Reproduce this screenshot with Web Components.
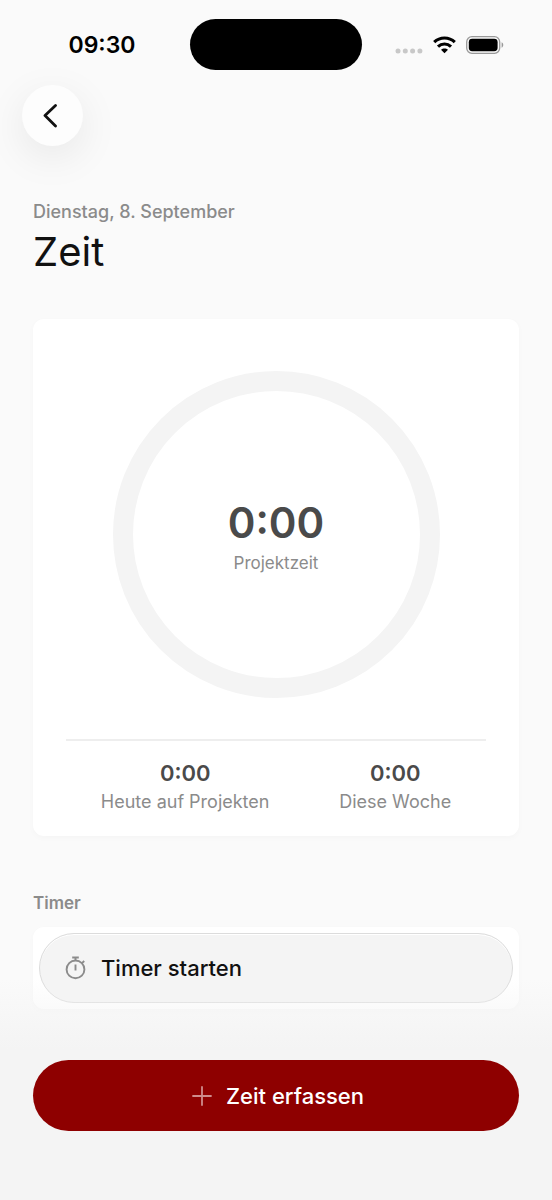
<!DOCTYPE html>
<html lang="de">
<head>
<meta charset="utf-8">
<meta name="viewport" content="width=device-width, initial-scale=1">
<title>Zeit</title>
<style>
  html, body { margin: 0; }
  body {
    --bg: #fafafa;
    --surface: #fff;
    --muted: #8b8b8b;
    --strong: #4a4a4a;
    --ink: #111;
    --track: #f4f4f4;
    --accent: #8e0000;
    --gutter: 33px;
    background: var(--bg);
    color: var(--ink);
    font-family: Inter, "Liberation Sans", sans-serif;
    -webkit-font-smoothing: antialiased;
  }
</style>
</head>
<body>
<time-screen>
  <status-bar slot="status" time="09:30"></status-bar>
  <back-button slot="nav"></back-button>
  <page-header eyebrow="Dienstag, 8. September">Zeit</page-header>
  <summary-card>
    <progress-ring slot="ring" value="0:00">Projektzeit</progress-ring>
    <stat-item value="0:00">Heute auf Projekten</stat-item>
    <stat-item value="0:00">Diese Woche</stat-item>
  </summary-card>
  <timer-section heading="Timer">Timer starten</timer-section>
  <primary-action slot="footer">Zeit erfassen</primary-action>
</time-screen>

<script>
  function define(name, html) {
    const template = document.createElement('template');
    template.innerHTML = html;
    customElements.define(name, class extends HTMLElement {
      constructor() {
        super();
        this.attachShadow({ mode: 'open' }).append(template.content.cloneNode(true));
      }
      connectedCallback() {
        for (const el of this.shadowRoot.querySelectorAll('[data-attr]')) {
          el.textContent = this.getAttribute(el.dataset.attr) || '';
        }
      }
    });
  }

  define('time-screen', `
    <style>
      :host { display: flex; flex-direction: column; min-height: 100vh; }
      .nav { padding: 0 22px; }
      main { flex: 1; padding: 56px var(--gutter) 0; }
      footer {
        position: sticky; bottom: 0; margin-top: -40px; padding: 91px var(--gutter) 69px;
        background: linear-gradient(rgba(244,244,244,0) 10px, #f4f4f4 80px);
        pointer-events: none;
      }
      ::slotted([slot=footer]) { pointer-events: auto; }
    </style>
    <slot name="status"></slot>
    <div class="nav"><slot name="nav"></slot></div>
    <main><slot></slot></main>
    <footer><slot name="footer"></slot></footer>`);

  define('status-bar', `
    <style>
      :host { display: grid; grid-template-columns: 1fr 172px 1fr; align-items: center; height: 51px; padding: 19px 0 15px; color: #000; }
      .time { font-size: 23px; line-height: 28px; font-weight: 600; text-align: center; padding-left: 14px; }
      .island { height: 51px; border-radius: 26px; background: #000; }
      .icons { display: flex; align-items: center; justify-content: center; gap: 10px; padding-right: 16px; }
      svg { display: block; }
    </style>
    <span class="time" data-attr="time"></span>
    <div class="island"></div>
    <div class="icons">
      <svg width="28" height="20" viewBox="0 0 28 20" fill="#c8c8c8" aria-hidden="true">
        <circle cx="3" cy="16" r="2.5"/><circle cx="10.3" cy="16" r="2.5"/><circle cx="17.6" cy="16" r="2.5"/><circle cx="24.9" cy="16" r="2.5"/>
      </svg>
      <svg width="23" height="18" viewBox="0 0 23 18" aria-hidden="true">
        <g fill="none" stroke="#000" stroke-width="3.1">
          <path d="M1.2 6.2C7 .6 16 .6 21.8 6.2"/>
          <path d="M5 10.600c3.700-3.500 9.300-3.500 13 0"/>
        </g>
        <path d="M11.500 17.300l-3.500-3.500c2-1.900 5-1.900 7 0z"/>
      </svg>
      <svg width="38" height="18" viewBox="0 0 38 18" aria-hidden="true">
        <rect x=".7" y=".7" width="33" height="16.600" rx="5.200" fill="none" stroke="#999" stroke-width="1.300"/>
        <rect x="2.800" y="2.800" width="28.800" height="12.400" rx="3.400"/>
        <path d="M35.600 6.300c2.200.8 2.200 4.600 0 5.400z" fill="#999"/>
      </svg>
    </div>`);

  define('back-button', `
    <style>
      :host { display: block; }
      button {
        display: grid; place-items: center; width: 61px; height: 61px; padding: 0; border: 0; border-radius: 50%;
        background: #fdfdfd; color: #111; box-shadow: 0 11px 40px rgba(0,0,0,.08);
      }
      svg { display: block; }
    </style>
    <button type="button" aria-label="Zurück">
      <svg width="24" height="24" viewBox="0 0 24 24" fill="none" stroke="currentColor" stroke-width="2.800" stroke-linecap="round" stroke-linejoin="round">
        <path d="M14.500 1.500L4 11.500l10.500 10.400"/>
      </svg>
    </button>`);

  define('page-header', `
    <style>
      :host { display: block; margin-bottom: 43px; }
      p { margin: 0; font-size: 18px; line-height: 20px; font-weight: 500; color: var(--muted); }
      h1 { margin: 6px 0 0; font-size: 40px; line-height: 48px; font-weight: 400; }
    </style>
    <p data-attr="eyebrow"></p>
    <h1><slot></slot></h1>`);

  define('summary-card', `
    <style>
      :host {
        display: block; padding: 52px var(--gutter) 24px; border-radius: 11px; background: var(--surface);
        box-shadow: 0 2px 6px rgba(0,0,0,.025);
      }
      .stats { display: flex; justify-content: space-around; margin-top: 41px; padding-top: 18px; border-top: 2px solid #eee; }
    </style>
    <slot name="ring"></slot>
    <div class="stats"><slot></slot></div>`);

  define('progress-ring', `
    <style>
      :host {
        display: flex; flex-direction: column; align-items: center; justify-content: center; box-sizing: border-box;
        width: 327px; max-width: 100%; aspect-ratio: 1; margin: 0 auto; border: 20px solid var(--track); border-radius: 50%;
      }
      strong { font-size: 42px; line-height: 52px; font-weight: 600; color: var(--strong); }
      span { margin-top: 4px; font-size: 17px; line-height: 20px; color: var(--muted); }
    </style>
    <strong data-attr="value"></strong>
    <span><slot></slot></span>`);

  define('stat-item', `
    <style>
      :host { display: flex; flex-direction: column; align-items: center; }
      strong { font-size: 22px; line-height: 28px; font-weight: 600; color: var(--strong); }
      span { margin-top: 5px; font-size: 18px; line-height: 20px; color: var(--muted); }
    </style>
    <strong data-attr="value"></strong>
    <span><slot></slot></span>`);

  define('timer-section', `
    <style>
      :host { display: block; margin-top: 57px; }
      h2 { margin: 0 0 14px; font-size: 17px; line-height: 20px; font-weight: 600; color: var(--muted); }
      .card { padding: 6px; border-radius: 11px; background: var(--surface); box-shadow: 0 2px 6px rgba(0,0,0,.02); }
      button {
        display: flex; align-items: center; gap: 14px; box-sizing: border-box; width: 100%; height: 70px; padding: 0 25px;
        border: 1px solid #dcdcdc; border-radius: 35px; background: #f4f4f4; box-shadow: inset 0 1px 0 #fff;
        color: #111; font: 500 22px/28px Inter, "Liberation Sans", sans-serif;
      }
      svg { display: block; color: var(--muted); }
    </style>
    <h2 data-attr="heading"></h2>
    <div class="card">
      <button type="button">
        <svg width="22" height="24" viewBox="0 0 22 24" fill="none" stroke="currentColor" stroke-width="1.900" aria-hidden="true">
          <circle cx="10.500" cy="13.400" r="8.900"/>
          <path d="M7.200 1.500h6.600M10.500 1.500v3M10.500 8.500v6M17 7.200l2.200-2.200" />
        </svg>
        <slot></slot>
      </button>
    </div>`);

  define('primary-action', `
    <style>
      :host { display: block; }
      button {
        display: flex; align-items: center; justify-content: center; gap: 14px; box-sizing: border-box; width: 100%;
        height: 71px; padding: 0 0 0 4px; border: 0; border-radius: 36px; background: var(--accent); color: #fff;
        font: 500 22px/28px Inter, "Liberation Sans", sans-serif;
      }
      svg { display: block; }
    </style>
    <button type="button">
      <svg width="20" height="20" viewBox="0 0 20 20" fill="none" stroke="#cf8c8c" stroke-width="1.800" stroke-linecap="round" aria-hidden="true">
        <path d="M10 1v18M1 10h18"/>
      </svg>
      <slot></slot>
    </button>`);
</script>
</body>
</html>
